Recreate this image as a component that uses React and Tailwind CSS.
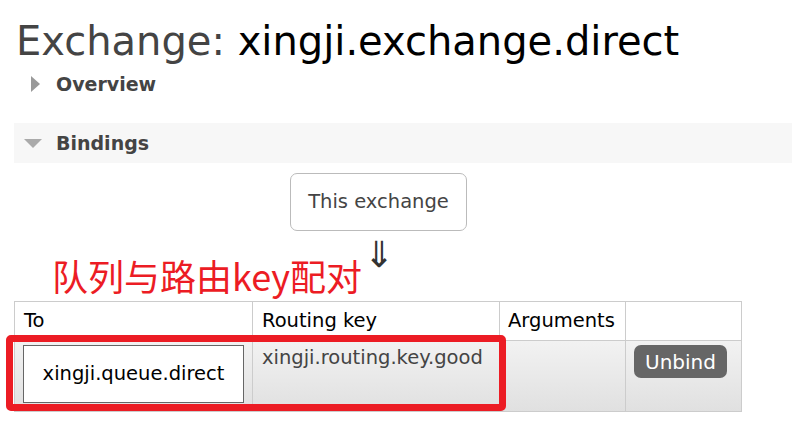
export default function App() {
  return (
    <div className="relative w-[792px] h-[429px] overflow-hidden bg-white font-['DejaVu_Sans',sans-serif] text-[#444]">
      <h1 className="pl-4 pt-[17px] text-[40px] leading-[48px] whitespace-nowrap">
        Exchange: <span className="text-black">xingji.exchange.direct</span>
      </h1>

      <div className="ml-[14px] mt-[3px] flex h-[32px] items-center">
        <span className="ml-[17px] h-0 w-0 border-y-[8px] border-l-[9px] border-y-transparent border-l-[#999]"></span>
        <span className="ml-[16px] text-[19px] font-bold text-[#444]">Overview</span>
      </div>

      <div className="ml-[14px] mt-[23px] flex h-[40px] items-center bg-[#f7f7f7]">
        <span className="ml-[10px] h-0 w-0 border-x-[9px] border-t-[9px] border-x-transparent border-t-[#aaa]"></span>
        <span className="ml-[14px] text-[19px] font-bold text-[#444]">Bindings</span>
      </div>

      <div className="ml-[290px] mt-[10px] flex h-[58px] w-[177px] items-center justify-center rounded-[7px] border border-[#bbb] text-[19.5px]">
        This exchange
      </div>

      <div className="flex h-[70px]">
        <span className="ml-[52px] mt-[20px] font-['Noto_Sans_CJK_SC',sans-serif] text-[36px] leading-[48px] text-[#ec1c24]">
          队列与路由key配对
        </span>
        <span className="ml-[2px] mt-[4px] text-[36px] leading-[40px] text-[#333]">⇓</span>
      </div>

      <table className="ml-[14px] border-collapse text-[19.5px]">
        <thead>
          <tr className="h-[39px] text-black">
            <th className="w-[238px] border border-[#ccc] px-[9px] text-left font-normal">To</th>
            <th className="w-[247px] border border-[#ccc] px-[9px] text-left font-normal">Routing key</th>
            <th className="w-[126px] border border-[#ccc] px-[8px] text-left font-normal">Arguments</th>
            <th className="w-[116px] border border-[#ccc]"></th>
          </tr>
        </thead>
        <tbody>
          <tr className="h-[71px] bg-gradient-to-b from-[#f2f2f2] to-[#e0e0e0]">
            <td className="border border-[#ccc] px-[8px] py-[4px] align-top">
              <div className="flex h-[58px] w-[221px] items-center justify-center border border-[#666] bg-white text-black">
                xingji.queue.direct
              </div>
            </td>
            <td className="border border-[#ccc] px-[9px] pt-[2px] align-top">xingji.routing.key.good</td>
            <td className="border border-[#ccc]"></td>
            <td className="border border-[#ccc] px-[8px] pt-[4px] align-top">
              <span className="inline-flex h-[33px] w-[93px] items-center justify-center rounded-[7px] bg-[#666] text-[20px] font-medium text-white">
                Unbind
              </span>
            </td>
          </tr>
        </tbody>
      </table>

      <div className="pointer-events-none absolute left-[6px] top-[335px] h-[76px] w-[500px] rounded-[5px] border-[7px] border-[#ec1c24]"></div>
    </div>
  );
}
